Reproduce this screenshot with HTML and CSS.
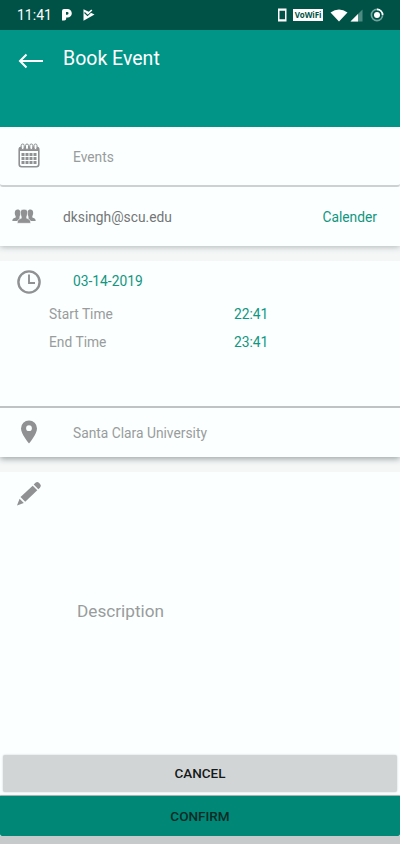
FILE: index.html
```html
<!DOCTYPE html>
<html lang="en">
<head>
<meta charset="utf-8">
<title>Book Event</title>
<link rel="stylesheet" href="styles.css">
</head>
<body>
<div class="statusbar">
  <span class="clock">11:41</span>
  <svg class="ic-p" width="10" height="12" viewBox="0 0 10 12"><path fill="#fff" fill-rule="evenodd" d="M2 0H5.500a4.200 4.200 0 0 1 0 8.600H4.200V9.500A2 2 0 0 1 2.200 11.500H0V2a2 2 0 0 1 2-2zM4 3V5.700H5.200a1.350 1.350 0 0 0 0-2.700z"/></svg>
  <svg class="ic-play" width="12" height="12" viewBox="0 0 12 12"><path fill="#fff" d="M0.500 0.300L11.500 5.500 0.500 11.700z"/><path fill="none" stroke="#005247" stroke-width="1.100" d="M1.500 3.500L4.500 6.500 9 2"/><path fill="none" stroke="#fff" stroke-width="1.600" d="M4.500 5L8.800 1"/></svg>
  <span class="spacer"></span>
  <svg class="ic-phone" width="10" height="14" viewBox="0 0 10 14"><path fill="#fff" fill-rule="evenodd" d="M1 0.500h8.500v13H1zM2.500 2.700v8.600h5.500V2.700z"/></svg>
  <span class="vowifi">Vo&#8288;WiFi</span>
  <svg class="ic-wifi" width="18" height="13" viewBox="0 0 18 13"><path fill="#fff" d="M0.500 3.500Q9-2.500 17.500 3.500L9 12.500z"/></svg>
  <svg class="ic-cell" width="13" height="13" viewBox="0 0 13 13"><path fill="#4d8b82" d="M12.500 0.500V12.500H0.500z"/><path fill="#fff" d="M8 5V12.500H0.500z"/></svg>
  <svg class="ic-ring" width="14" height="14" viewBox="0 0 14 14"><circle cx="7" cy="7" r="5.600" fill="none" stroke="#70a59e" stroke-width="1.600"/><path d="M7 1.400A5.600 5.600 0 0 1 12.600 7" fill="none" stroke="#fff" stroke-width="1.600"/><circle cx="7" cy="7" r="3" fill="#fff"/></svg>
</div>
<header class="appbar">
  <svg width="26" height="16" viewBox="0 0 26 16"><path d="M25 8H2M8.500 1.500L2 8l6.500 6.500" fill="none" stroke="#fff" stroke-width="2"/></svg>
  <h1>Book Event</h1>
</header>
<main>
  <section class="card events">
    <svg class="icon" width="24" height="26" viewBox="0 0 24 26"><rect x="2.200" y="4.200" width="19.600" height="19.500" rx="2.500" fill="none" stroke="#8f9193" stroke-width="1.600"/><path d="M2.500 4.500h19v3.500h-19z" fill="#8f9193"/><g fill="#fbffff" stroke="#8f9193"><rect x="4.200" y="1" width="3" height="5.500" rx="1.500"/><rect x="8.500" y="1" width="3" height="5.500" rx="1.500"/><rect x="12.800" y="1" width="3" height="5.500" rx="1.500"/><rect x="17" y="1" width="3" height="5.500" rx="1.500"/></g><path d="M4.500 11.500h15M4.500 15.500h15M4.500 19.500h15" fill="none" stroke="#8f9193" stroke-width="3" stroke-dasharray="3 1"/></svg>
    <span class="hint">Events</span>
  </section>
  <section class="card people">
    <svg class="icon" width="24" height="15" viewBox="0 0 24 15"><g fill="#8f9193"><path d="M5.500 .5C8.500.5 8.800 3 8.200 5.500L7.500 8v2L5.500 12H0.300C0.300 9.500 2 9.300 3.700 8.500V7.200C2.300 5.200 2.300 .5 5.500 .5z"/><path d="M18.500 .5C15.500.5 15.200 3 15.800 5.500L16.500 8v2L18.500 12h5.200C23.700 9.500 22 9.300 20.300 8.500V7.200C21.700 5.200 21.700 .5 18.500 .5z"/><path stroke="#fbffff" stroke-width=".6" d="M12 .2C16 .2 16.300 3.700 14.700 7.700V9.300C17 10.200 18.700 10.400 18.700 14.300H5.300C5.300 10.400 7 10.200 9.300 9.300V7.700C7.700 3.700 8 .2 12 .2z"/></g></svg>
    <span class="email">dksingh@scu.edu</span>
    <span class="link">Calender</span>
  </section>
  <section class="card schedule">
    <div class="date">
      <svg class="icon" width="24" height="24" viewBox="0 0 24 24"><circle cx="12" cy="12" r="10.600" fill="none" stroke="#8f9193" stroke-width="2.400"/><path d="M12 4.500V13h6" fill="none" stroke="#8f9193" stroke-width="1.900"/></svg>
      <span class="teal">03-14-2019</span>
    </div>
    <div class="time"><span class="hint">Start Time</span><span class="teal">22:41</span></div>
    <div class="time"><span class="hint">End Time</span><span class="teal">23:41</span></div>
  </section>
  <section class="card place">
    <svg class="icon" width="18" height="24" viewBox="0 0 18 24"><path fill="#8f9193" fill-rule="evenodd" d="M9 .5A8 8 0 0 1 17 8.500C17 14 9 23.500 9 23.500S1 14 1 8.500A8 8 0 0 1 9 .5zM9 5.300a2.900 2.900 0 1 0 0 5.800 2.900 2.900 0 0 0 0-5.800z"/></svg>
    <span class="hint">Santa Clara University</span>
  </section>
  <section class="card notes">
    <svg class="icon" width="26" height="26" viewBox="0 0 26 26"><g fill="#8f9193"><path d="M17.700 3.500l1.800-1.700q1.800-1.600 3.600.1l1 1q1.600 1.800 0 3.500l-1.700 1.800z"/><path d="M16.700 4.700l4.600 4.600L9.200 20.700 4.500 16z"/><path d="M3.600 17.700l4.200 4.200L1 24.500z"/></g></svg>
    <span class="description">Description</span>
  </section>
</main>
<footer>
  <button class="cancel">CANCEL</button>
  <button class="confirm">CONFIRM</button>
</footer>
</body>
</html>
```
FILE: styles.css
```css
* { box-sizing: border-box; }
body {
  margin: 0;
  width: 400px;
  height: 844px;
  overflow: hidden;
  display: flex;
  flex-direction: column;
  background: #f5f7f7;
  font: 13.8px/20px Roboto, sans-serif;
}
svg { display: block; flex: none; }
.statusbar {
  height: 30px;
  flex: none;
  display: flex;
  align-items: center;
  padding: 0 16px 0 17px;
  background: #005247;
  color: #fff;
}
.clock { width: 45px; font-size: 14px; }
.ic-play { margin-left: 11px; }
.spacer { flex: 1; }
.vowifi {
  width: 30px;
  height: 12px;
  margin: 0 7px 0 6px;
  background: #fff;
  color: #005247;
  font: 700 8px/12px "Open Sans", sans-serif;
  letter-spacing: -0.1px;
  text-align: center;
}
.ic-cell { margin: 0 7px 0 2px; }
.appbar {
  height: 97px;
  flex: none;
  display: flex;
  align-items: flex-start;
  padding: 16px 18px;
  gap: 19px;
  background: #009587;
  color: #fff;
}
.appbar svg { margin-top: 7px; }
h1 { margin: 1px 0 0; font-size: 19.5px; line-height: 24px; font-weight: 400; }
.card { display: flex; background: #fbffff; }
.hint { color: #999c9c; }
.teal, .link { color: #119680; }
.events { height: 60px; padding: 16px 17px; border-bottom: 2px solid #cdd1d1; border-radius: 0 0 3px 3px; gap: 32px; }
.events .hint { margin-top: 4px; }
.people { height: 59px; padding: 20px 23px 0 12px; box-shadow: 0 1px 6px #aeb5b5; clip-path: inset(0 0 -15px 0); }
.people .icon { margin-top: 2px; }
.email { margin-left: 27px; color: #737676; }
.link { margin-left: auto; }
.schedule { height: 147px; margin-top: 15px; padding: 9px 17px 0; flex-direction: column; border-bottom: 2px solid #bfc3c3; }
.date { display: flex; height: 34px; gap: 32px; }
.date .teal { margin-top: 1px; }
.time { display: flex; height: 28px; padding-left: 32px; }
.time .hint { width: 185px; }
.place { height: 49px; padding: 12px 20px; gap: 35px; box-shadow: 0 2px 6px #9da5a5; clip-path: inset(0 0 -15px 0); }
.place .hint { margin-top: 3px; }
.notes { height: 277px; margin-top: 15px; padding: 9px 16px; gap: 35px; }
.description { margin-top: 120px; font-size: 17.2px; color: #999c9c; }
footer { height: 95px; padding-top: 6px; background: linear-gradient(#fbffff 87px, #c7caca 87px); }
button { display: block; border: 0; padding: 0; color: #161919; font: 500 13.5px/20px Roboto, sans-serif; }
.cancel { width: 394px; height: 37px; margin: 0 3px 4px; padding-bottom: 2px; border-radius: 2px; background: #d2d5d6; box-shadow: 0 0 2px #c4c8c8; }
.confirm { width: 400px; height: 40px; border-radius: 0 0 2px 2px; background: #008776; box-shadow: 0 -1px 1px #a0aaa8; color: #0a2c27; }
```
